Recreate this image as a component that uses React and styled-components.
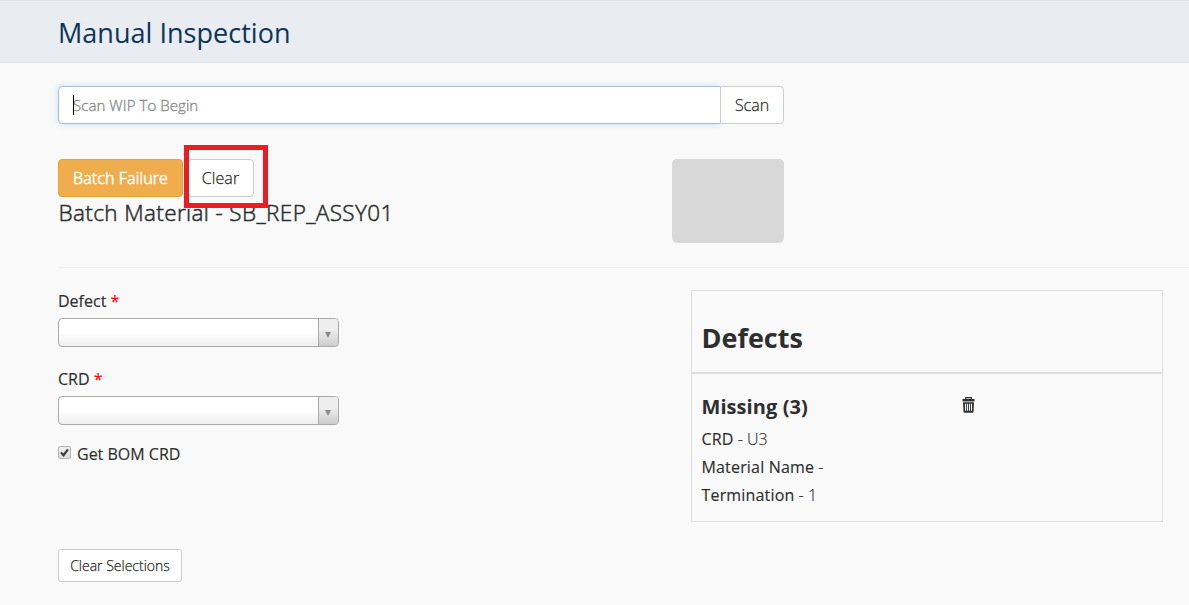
import React from 'react';
import styled, { createGlobalStyle } from 'styled-components';

const GlobalStyle = createGlobalStyle`
  *, *::before, *::after { box-sizing: border-box; }
  body {
    margin: 0;
    background: #f9f9f9;
    color: #2c2e2f;
    font-family: "Open Sans", sans-serif;
    font-size: 16px;
    line-height: 20px;
    overflow: hidden;
  }
`;

const Page = styled.div`
  height: 605px;
  display: flex;
  flex-direction: column;
`;

const Header = styled.header`
  flex: none;
  height: 63px;
  padding: 14px 0 0 58px;
  background: #e9ecf1;
  border-top: 1px solid #e0e4ea;
  border-bottom: 1px solid #d9dfe6;
`;

const Title = styled.h1`
  margin: 0;
  font-size: 27px;
  line-height: 36px;
  font-weight: 400;
  color: #0b3559;
  letter-spacing: 0.03px;
`;

const Content = styled.main`
  padding: 23px 0 0 58px;
`;

const ScanGroup = styled.div`
  display: flex;
  width: 726px;
  height: 38px;
`;

const ScanField = styled.div`
  position: relative;
  width: 663px;
`;

const ScanInput = styled.input`
  display: block;
  width: 100%;
  height: 38px;
  padding: 0 14px;
  border: 1px solid #a6bfd8;
  border-radius: 4px 0 0 4px;
  background: #fff;
  box-shadow: 0 0 6px rgba(135, 190, 240, 0.45);
  font: 300 15px/20px "Open Sans", sans-serif;
  letter-spacing: 0.07px;
  outline: none;
  &::placeholder { color: #888; opacity: 1; -webkit-text-stroke: 0.3px #888; }
`;

const Caret = styled.span`
  position: absolute;
  left: 15px;
  top: 9px;
  width: 1px;
  height: 20px;
  background: #000;
`;

const Button = styled.button`
  display: flex;
  align-items: center;
  justify-content: center;
  height: ${(p) => (p.$small ? '33px' : '38px')};
  width: ${(p) => p.$width};
  padding: 0;
  border: 1px solid ${(p) => (p.$warning ? '#eea236' : '#ccc')};
  border-radius: ${(p) => (p.$small ? '3px' : '4px')};
  background: ${(p) => (p.$warning ? '#f0ad4e' : '#fff')};
  color: ${(p) => (p.$warning ? '#fff' : '#2a2a2a')};
  font: 300 ${(p) => (p.$small ? '14px/20px' : '16px/22px')} "Open Sans", sans-serif;
  -webkit-text-stroke: ${(p) => (p.$warning ? '0.6px' : '0.25px')} currentColor;
  letter-spacing: ${(p) => p.$spacing || '0'};
  white-space: nowrap;
`;

const ScanButton = styled(Button)`
  position: relative;
  margin-left: -1px;
  border-radius: 0 4px 4px 0;
`;

const BatchRow = styled.section`
  display: flex;
  justify-content: space-between;
  width: 726px;
  height: 108px;
  padding-top: 35px;
  box-sizing: content-box;
`;

const Actions = styled.div`
  display: flex;
  gap: 4px;
`;

const Highlighted = styled.div`
  position: relative;
  &::after {
    content: "";
    position: absolute;
    left: -3px;
    top: -14px;
    width: 84px;
    height: 63px;
    border: 5px solid #ed1c24;
  }
`;

const BatchTitle = styled.h2`
  margin: 0;
  padding-left: 0.5px;
  font-size: 22.5px;
  line-height: 31px;
  font-weight: 300;
  -webkit-text-stroke: 0.5px currentColor;
  letter-spacing: 0.38px;
`;

const Preview = styled.div`
  width: 112px;
  height: 84px;
  border-radius: 5px;
  background: #d8d8d8;
`;

const Lower = styled.section`
  display: flex;
  justify-content: space-between;
  padding: 22px 26px 0 0;
  border-top: 1px solid #eee;
`;

const Form = styled.form`
  display: flex;
  flex-direction: column;
  align-items: flex-start;
`;

const FieldWrap = styled.div`
  display: flex;
  flex-direction: column;
  padding-top: ${(p) => p.$offset || '0'};
`;

const Label = styled.label`
  height: 20px;
  font-weight: 400;
  -webkit-text-stroke: 0.15px currentColor;
`;

const Star = styled.span`
  color: #f00;
`;

const SelectBox = styled.div`
  display: flex;
  justify-content: flex-end;
  width: 281px;
  height: 29px;
  margin: ${(p) => p.$margin};
  border: 1px solid #aaa;
  border-radius: 4px;
  overflow: hidden;
  background: linear-gradient(to top, #eee 0%, #fff 50%);
`;

const SelectArrow = styled.div`
  display: flex;
  justify-content: center;
  padding: 13px 1px 0 0;
  width: 20px;
  border-left: 1px solid #aaa;
  background: linear-gradient(to top, #ccc 0%, #eee 60%);
`;

const Triangle = styled.span`
  width: 0;
  height: 0;
  border: solid transparent;
  border-width: 6px 3.5px 0;
  border-top-color: #888;
`;

const CheckRow = styled.div`
  display: flex;
  align-items: flex-start;
  gap: 6px;
  height: 20px;
  margin-bottom: 85px;
`;

const CheckBox = styled.span`
  display: flex;
  width: 13px;
  height: 13px;
  margin-top: 2px;
  border: 1px solid #b4b4b4;
  border-radius: 2px;
  background: linear-gradient(#f0f0f0, #dcdcdc);
`;

const Panel = styled.aside`
  width: 472px;
  height: 232px;
  border: 1px solid #ddd;
`;

const PanelHead = styled.div`
  height: 83px;
  padding: 29px 9.5px 0;
  border-bottom: 2px solid #ddd;
`;

const PanelTitle = styled.h2`
  margin: 0;
  font-size: 27px;
  line-height: 36px;
  font-weight: 700;
`;

const DefectEntry = styled.div`
  display: grid;
  grid-template-columns: 260px auto;
  padding: 18px 9.5px 0;
`;

const DefectName = styled.h3`
  margin: 1px 0 4px;
  font-size: 20px;
  line-height: 28px;
  font-weight: 700;
  letter-spacing: 0.07px;
`;

const Detail = styled.p`
  margin: 0;
  line-height: 28px;
  font-size: 16px;
  font-weight: 300;
  -webkit-text-stroke: 0.15px currentColor;
`;

const Strong = styled.span`
  font-weight: 400;
  letter-spacing: 0.17px;
`;

const TrashButton = styled.span`
  padding: 5px 0 0 0.5px;
`;

const TrashIcon = () => (
  <svg width="13" height="16" viewBox="0 0 13 16" display="block">
    <path d="M3.7 2.5V.7h5.6v1.8" fill="none" stroke="#2c2e2f" strokeWidth="1.2" />
    <path d="M0.5 2h12v2.4h-12z" fill="#2c2e2f" />
    <path d="M1 5.2h11l-.5 9.8a1 1 0 0 1-1 .8h-8a1 1 0 0 1-1-.8z" fill="#2c2e2f" />
    <path d="M3.5 6.8v7M5.5 6.8v7M7.5 6.8v7M9.5 6.8v7" stroke="#f9f9f9" strokeWidth="1.1" />
  </svg>
);

function SelectField({ label, offset, margin }) {
  return (
    <FieldWrap $offset={offset}>
      <Label>{label} <Star>*</Star></Label>
      <SelectBox $margin={margin}>
        <SelectArrow><Triangle /></SelectArrow>
      </SelectBox>
    </FieldWrap>
  );
}

export default function App() {
  return (
    <Page>
      <GlobalStyle />
      <Header>
        <Title>Manual Inspection</Title>
      </Header>
      <Content>
        <ScanGroup>
          <ScanField>
            <ScanInput placeholder="Scan WIP To Begin" />
            <Caret />
          </ScanField>
          <ScanButton $width="64px">Scan</ScanButton>
        </ScanGroup>
        <BatchRow>
          <div>
            <Actions>
              <Button $warning $width="125px" $spacing="0.13px">Batch Failure</Button>
              <Highlighted>
                <Button $width="67px" $spacing="0.1px">Clear</Button>
              </Highlighted>
            </Actions>
            <BatchTitle>Batch Material - SB_REP_ASSY01</BatchTitle>
          </div>
          <Preview />
        </BatchRow>
        <Lower>
          <Form>
            <SelectField label="Defect" offset="1px" margin="7px 0 22px" />
            <SelectField label="CRD" margin="7px 0 19px" />
            <CheckRow>
              <CheckBox>
                <svg width="11" height="11" viewBox="0 0 11 11">
                  <path d="M2 5.6l2.5 2.6L9 2.4" fill="none" stroke="#3c3c3c" strokeWidth="2.2" />
                </svg>
              </CheckBox>
              <Label>Get BOM CRD</Label>
            </CheckRow>
            <Button type="button" $small $width="124px">Clear Selections</Button>
          </Form>
          <Panel>
            <PanelHead>
              <PanelTitle>Defects</PanelTitle>
            </PanelHead>
            <DefectEntry>
              <div>
                <DefectName>Missing (3)</DefectName>
                <Detail><Strong>CRD</Strong> - U3</Detail>
                <Detail><Strong>Material Name</Strong> -</Detail>
                <Detail><Strong>Termination</Strong> - 1</Detail>
              </div>
              <TrashButton><TrashIcon /></TrashButton>
            </DefectEntry>
          </Panel>
        </Lower>
      </Content>
    </Page>
  );
}
